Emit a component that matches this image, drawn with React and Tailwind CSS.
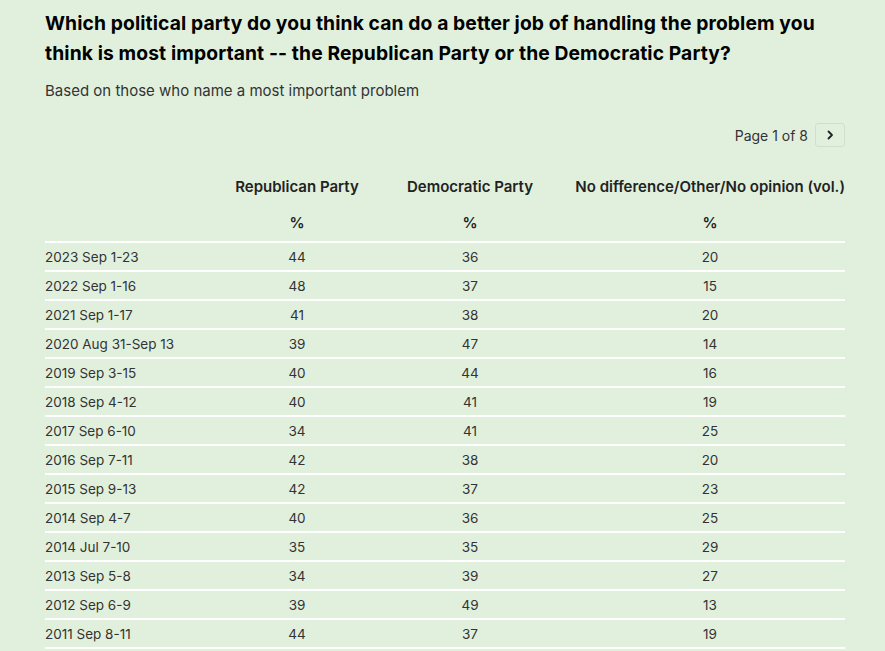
import React from 'react';

const rows = [
  ['2023 Sep 1-23', 44, 36, 20],
  ['2022 Sep 1-16', 48, 37, 15],
  ['2021 Sep 1-17', 41, 38, 20],
  ['2020 Aug 31-Sep 13', 39, 47, 14],
  ['2019 Sep 3-15', 40, 44, 16],
  ['2018 Sep 4-12', 40, 41, 19],
  ['2017 Sep 6-10', 34, 41, 25],
  ['2016 Sep 7-11', 42, 38, 20],
  ['2015 Sep 9-13', 42, 37, 23],
  ['2014 Sep 4-7', 40, 36, 25],
  ['2014 Jul 7-10', 35, 35, 29],
  ['2013 Sep 5-8', 34, 39, 27],
  ['2012 Sep 6-9', 39, 49, 13],
  ['2011 Sep 8-11', 44, 37, 19],
];

export default function App() {
  return (
    <div className="h-screen bg-[#e1f0dd] text-[#111] overflow-hidden" style={{ fontFamily: 'Inter, "Liberation Sans", sans-serif' }}>
      <div className="pl-[45px] pr-[40px] pt-[8px]">
        <h1 className="max-w-[790px] text-[19.3px] leading-[30px] font-bold tracking-[0.1px] text-black">
          Which political party do you think can do a better job of handling the problem you think is most important -- the Republican Party or the Democratic Party?
        </h1>
        <p className="mt-[14px] text-[15px] leading-[18px] text-[#333]">Based on those who name a most important problem</p>

        <div className="w-[800px] mt-[23px]">
          <div className="flex items-center justify-end gap-[7px] h-[24px]">
            <span className="text-[14px] text-[#333]">Page 1 of 8</span>
            <button className="w-[30px] h-[24px] border border-[#cfe0ca] rounded-[3px] flex items-center justify-center text-[#222]">
              <svg width="10" height="10" viewBox="0 0 10 10" fill="none" stroke="currentColor" strokeWidth="1.8" strokeLinecap="round" strokeLinejoin="round"><path d="M3.5 1.5 7 5 3.5 8.5" /></svg>
            </button>
          </div>

          <table className="w-[800px] mt-[28px] border-collapse table-fixed text-[13.5px]">
            <colgroup>
              <col className="w-[184px]" />
              <col className="w-[136px]" />
              <col className="w-[210px]" />
              <col className="w-[270px]" />
            </colgroup>
            <thead>
              <tr className="h-[31px] text-[15px] text-[#222]">
                <th className="pb-[6px]"></th>
                <th className="text-center font-semibold pb-[6px]">Republican Party</th>
                <th className="text-center font-semibold pb-[6px]">Democratic Party</th>
                <th className="text-right font-semibold pb-[6px] whitespace-nowrap">No difference/Other/No opinion (vol.)</th>
              </tr>
              <tr className="h-[36px] text-[15px] text-[#222] border-b-2 border-white">
                <th></th>
                <th className="text-center font-semibold">%</th>
                <th className="text-center font-semibold">%</th>
                <th className="text-center font-semibold">%</th>
              </tr>
            </thead>
            <tbody className="text-[#333]">
              {rows.map((r) => (
                <tr key={r[0]} className="h-[29px] border-b-2 border-white">
                  <td className="text-left pt-[2px]">{r[0]}</td>
                  <td className="text-center pt-[2px]">{r[1]}</td>
                  <td className="text-center pt-[2px]">{r[2]}</td>
                  <td className="text-center pt-[2px]">{r[3]}</td>
                </tr>
              ))}
            </tbody>
          </table>
        </div>
      </div>
    </div>
  );
}
